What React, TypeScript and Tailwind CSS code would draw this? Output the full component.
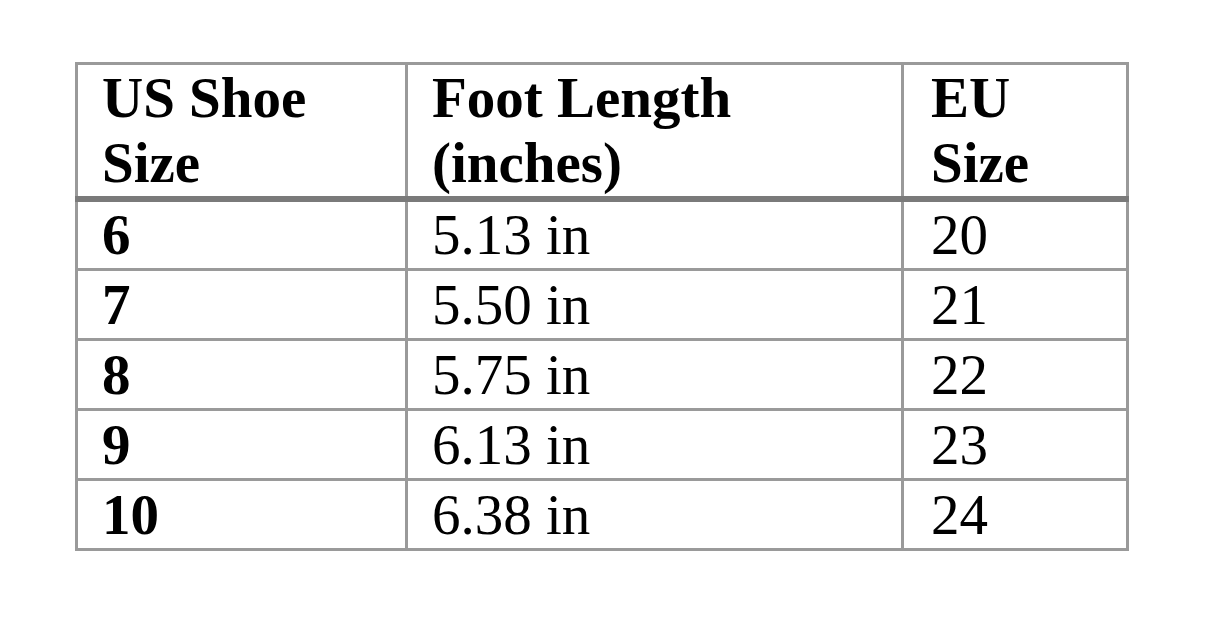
import React from 'react';

const rows = [
  { us: '6', foot: '5.13 in', eu: '20' },
  { us: '7', foot: '5.50 in', eu: '21' },
  { us: '8', foot: '5.75 in', eu: '22' },
  { us: '9', foot: '6.13 in', eu: '23' },
  { us: '10', foot: '6.38 in', eu: '24' },
];

export default function App() {
  return (
    <div className="w-[1206px] h-[626px] bg-white pt-[62px] pl-[75px] font-['Liberation_Serif','Times_New_Roman',serif] text-black">
      <table className="table-fixed border-collapse w-[1051px] border-[3px] border-[#9a9a9a] text-[57px]">
        <colgroup>
          <col className="w-[330px]" />
          <col className="w-[496px]" />
          <col className="w-[225px]" />
        </colgroup>
        <thead>
          <tr className="border-b-[6px] border-[#7a7a7a]">
            <th className="border-[3px] border-[#9a9a9a] border-b-[6px] border-b-[#7a7a7a] px-6 pt-0 pb-[1px] text-left align-top font-bold leading-[65px]">
              US Shoe
              <br />
              Size
            </th>
            <th className="border-[3px] border-[#9a9a9a] border-b-[6px] border-b-[#7a7a7a] px-6 pt-0 pb-[1px] text-left align-top font-bold leading-[65px]">
              Foot Length
              <br />
              (inches)
            </th>
            <th className="border-[3px] border-[#9a9a9a] border-b-[6px] border-b-[#7a7a7a] pl-[27px] pr-6 pt-0 pb-[1px] text-left align-top font-bold leading-[65px]">
              EU
              <br />
              Size
            </th>
          </tr>
        </thead>
        <tbody>
          {rows.map((r) => (
            <tr key={r.us}>
              <td className="border-[3px] border-[#9a9a9a] px-6 h-[70px] py-0 leading-[66px] font-bold">{r.us}</td>
              <td className="border-[3px] border-[#9a9a9a] px-6 h-[70px] py-0 leading-[66px]">{r.foot}</td>
              <td className="border-[3px] border-[#9a9a9a] pl-[27px] pr-6 h-[70px] py-0 leading-[66px]">{r.eu}</td>
            </tr>
          ))}
        </tbody>
      </table>
    </div>
  );
}
